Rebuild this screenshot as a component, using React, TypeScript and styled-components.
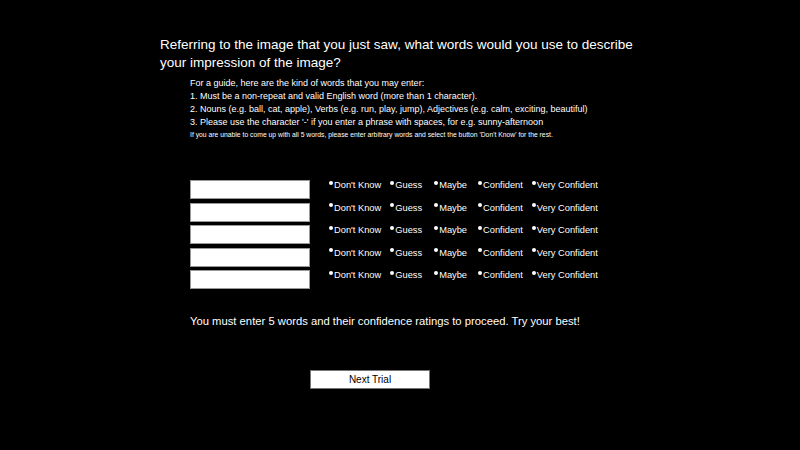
import React from "react";
import styled, { createGlobalStyle } from "styled-components";

const Global = createGlobalStyle`
  html, body { margin: 0; padding: 0; background: #000; }
  body { font-family: "Liberation Sans", Arial, sans-serif; color: #fff; }
`;

const Page = styled.div`
  width: 800px;
  height: 450px;
  background: #000;
  box-sizing: border-box;
  padding: 36px 0 0 160px;
`;

const Title = styled.h1`
  margin: 0;
  font-size: 13.5px;
  font-weight: normal;
  line-height: 18px;
  width: 500px;
`;

const Guide = styled.div`
  margin: 4.5px 0 0 30px;
  font-size: 9px;
  line-height: 13px;
`;

const Tiny = styled.div`
  font-size: 6.8px;
  line-height: 11px;
`;

const Rows = styled.div`
  margin: 40.5px 0 0 30px;
  display: flex;
  flex-direction: column;
  gap: 3.5px;
`;

const Row = styled.div`
  display: flex;
  align-items: flex-start;
  height: 19px;
`;

const WordInput = styled.input`
  box-sizing: border-box;
  width: 120px;
  height: 19px;
  margin: 0;
  padding: 0 2px;
  border: 1px solid #999;
  background: #fff;
  outline: none;
`;

const Options = styled.div`
  display: flex;
  margin-left: 19px;
`;

const Option = styled.label<{ $gap: number }>`
  display: flex;
  align-items: flex-start;
  font-size: 9.3px;
  line-height: 10px;
  margin-right: ${(p) => p.$gap}px;
`;

const Dot = styled.span`
  flex: none;
  width: 4px;
  height: 4px;
  border-radius: 50%;
  background: #fff;
  margin-top: 0.5px;
  margin-right: 1px;
`;

const Notice = styled.p`
  margin: 25px 0 0 30px;
  font-size: 11.25px;
  line-height: 14px;
`;

const ButtonRow = styled.div`
  margin: 41px 0 0 150px;
`;

const NextButton = styled.button`
  box-sizing: border-box;
  width: 120px;
  height: 19px;
  background: #fff;
  color: #000;
  border: 1px solid #777;
  font-family: "Liberation Sans", Arial, sans-serif;
  font-size: 10px;
  padding: 0;
`;

const options: [string, number][] = [
  ["Don't Know", 9],
  ["Guess", 12],
  ["Maybe", 11],
  ["Confident", 9],
  ["Very Confident", 0],
];

export default function App() {
  return (
    <Page>
      <Global />
      <Title>
        Referring to the image that you just saw, what words would you use to describe your impression of the image?
      </Title>
      <Guide>
        <div>For a guide, here are the kind of words that you may enter:</div>
        <div>1. Must be a non-repeat and valid English word (more than 1 character).</div>
        <div>2. Nouns (e.g. ball, cat, apple), Verbs (e.g. run, play, jump), Adjectives (e.g. calm, exciting, beautiful)</div>
        <div>3. Please use the character '-' if you enter a phrase with spaces, for e.g. sunny-afternoon</div>
        <Tiny>If you are unable to come up with all 5 words, please enter arbitrary words and select the button 'Don't Know' for the rest.</Tiny>
      </Guide>
      <Rows>
        {[0, 1, 2, 3, 4].map((r) => (
          <Row key={r}>
            <WordInput type="text" />
            <Options>
              {options.map(([label, gap]) => (
                <Option key={label} $gap={gap}>
                  <Dot />
                  {label}
                </Option>
              ))}
            </Options>
          </Row>
        ))}
      </Rows>
      <Notice>You must enter 5 words and their confidence ratings to proceed. Try your best!</Notice>
      <ButtonRow>
        <NextButton>Next Trial</NextButton>
      </ButtonRow>
    </Page>
  );
}
